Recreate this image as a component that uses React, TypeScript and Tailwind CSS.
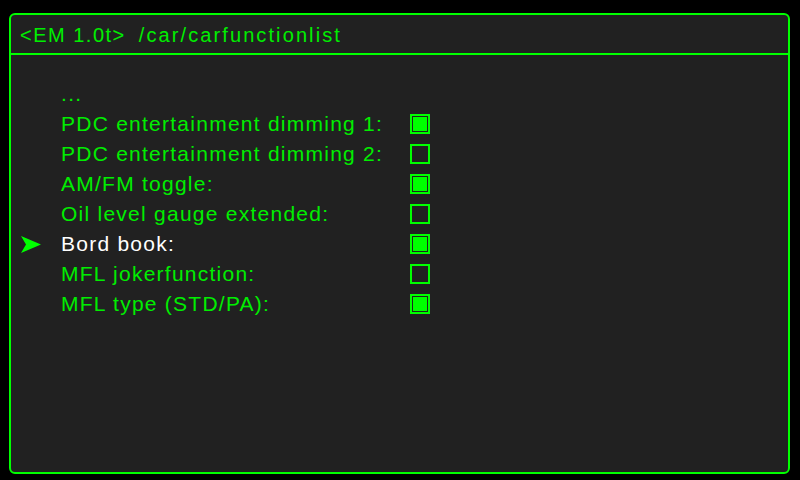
import React from 'react';

type Item = { label: string; checked: boolean; selected?: boolean };

const items: Item[] = [
  { label: 'PDC entertainment dimming 1:', checked: true },
  { label: 'PDC entertainment dimming 2:', checked: false },
  { label: 'AM/FM toggle:', checked: true },
  { label: 'Oil level gauge extended:', checked: false },
  { label: 'Bord book:', checked: true, selected: true },
  { label: 'MFL jokerfunction:', checked: false },
  { label: 'MFL type (STD/PA):', checked: true },
];

function Arrow() {
  return (
    <svg width="20" height="17" viewBox="0 0 20 17" className="ml-[10px]">
      <path d="M0 0 L20 8.5 L0 17 L5 8.5 Z" fill="#00ff00" />
    </svg>
  );
}

function Checkbox({ checked }: { checked: boolean }) {
  return (
    <div className="w-[20px] h-[20px] border-2 border-[#00ff00] p-[1px]">
      {checked && <div className="w-full h-full bg-[#00ff00]" />}
    </div>
  );
}

export default function App() {
  return (
    <div
      className="w-[800px] h-[480px] bg-black pt-[13px] pl-[9px] pr-[10px] pb-[6px]"
      style={{ fontFamily: '"Liberation Sans", Arial, sans-serif' }}
    >
      <div className="h-full flex flex-col border-2 border-[#00ff00] rounded-[6px] bg-[#212121]">
        {/* header */}
        <div className="h-[40px] shrink-0 border-b-2 border-[#00ff00] flex items-center pl-[9px] pt-[2px] text-[20px] tracking-[1.5px] text-[#00ee00]">
          <span>&lt;EM 1.0t&gt;</span>
          <span className="ml-[13px] tracking-[2.1px]">/car/carfunctionlist</span>
        </div>

        {/* list */}
        <div className="flex flex-col pt-[24px]">
          <div className="flex items-center h-[30px]">
            <div className="w-[50px]" />
            <span className="text-[21px] tracking-[1.3px] text-[#00ee00]">...</span>
          </div>
          {items.map((it) => (
            <div key={it.label} className="flex items-center h-[30px]">
              <div className="w-[50px] flex items-center">{it.selected && <Arrow />}</div>
              <span
                className={
                  'w-[349px] text-[21px] tracking-[1.25px] whitespace-nowrap ' +
                  (it.selected ? 'text-white' : 'text-[#00ee00]')
                }
              >
                {it.label}
              </span>
              <Checkbox checked={it.checked} />
            </div>
          ))}
        </div>
      </div>
    </div>
  );
}
